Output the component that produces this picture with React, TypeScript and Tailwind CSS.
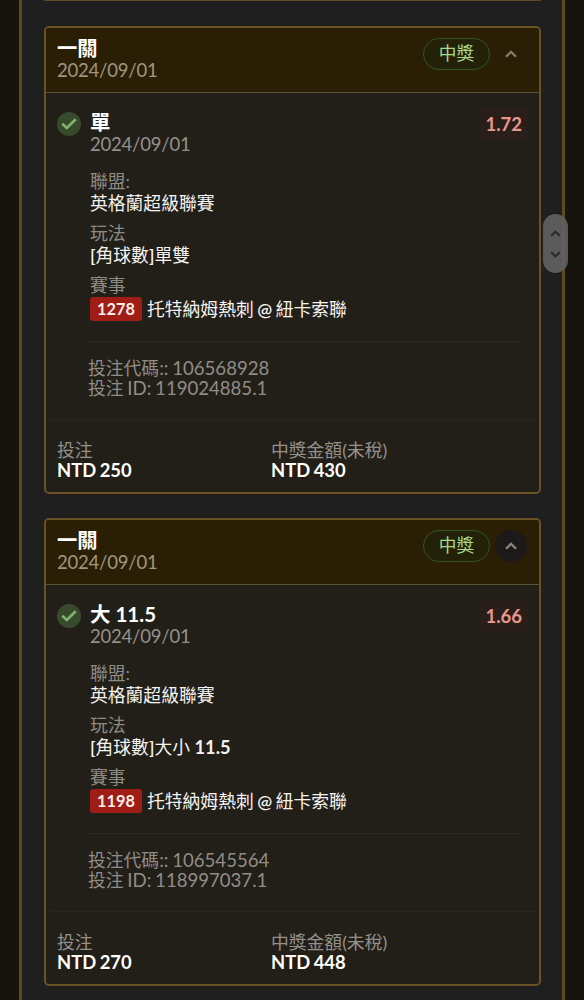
import React from "react";

type Bet = {
  pick: string;
  market: React.ReactNode;
  odds: string;
  event: string;
  code: string;
  id: string;
  stake: string;
  payout: string;
  active?: boolean;
};

const bets: Bet[] = [
  {
    pick: "單",
    market: (
      <>
        <span className="font-semibold">[</span>角球數<span className="font-semibold">]</span>單雙
      </>
    ),
    odds: "1.72",
    event: "1278",
    code: "106568928",
    id: "119024885.1",
    stake: "NTD 250",
    payout: "NTD 430",
  },
  {
    pick: "大 11.5",
    market: (
      <>
        <span className="font-semibold">[</span>角球數<span className="font-semibold">]</span>大小{" "}
        <b className="text-[18.2px] font-bold">11.5</b>
      </>
    ),
    odds: "1.66",
    event: "1198",
    code: "106545564",
    id: "118997037.1",
    stake: "NTD 270",
    payout: "NTD 448",
    active: true,
  },
];

function Chevron({ className = "", down = false }: { className?: string; down?: boolean }) {
  return (
    <svg viewBox="0 0 12 8" className={className} fill="none" stroke="currentColor" strokeWidth="2.3">
      <path d={down ? "M1 1.2 6 6.2 11 1.2" : "M1 6.8 6 1.8 11 6.8"} />
    </svg>
  );
}

function Field({ label, children }: { label: string; children: React.ReactNode }) {
  return (
    <div className="mb-[9px]">
      <div className="h-[21px] leading-[21px] text-[#8e8b85]">{label}</div>
      <div className="flex h-[22px] items-center leading-[21px] whitespace-pre text-[#f4f3f0]">{children}</div>
    </div>
  );
}

function BetCard({ bet }: { bet: Bet }) {
  return (
    <article className="flex h-[468px] shrink-0 flex-col overflow-hidden rounded-[5px] border-2 border-[#6b5222] bg-[#221f19]">
      <header className="flex h-[65px] shrink-0 items-start justify-between border-b border-[#5a5136] bg-[#2a1f05] pt-[10px] pr-[12px] pl-[11px]">
        <div>
          <h2 className="h-[21px] text-[20.3px] leading-[21px] font-bold text-white">一關</h2>
          <div className="h-[21px] text-[18.5px] leading-[22px] tracking-[-0.2px] text-[#a0967f]">2024/09/01</div>
        </div>
        <div className="flex items-center gap-[5px]">
          <span className="flex h-[32px] w-[67px] items-center justify-center rounded-full border border-[#35531f] bg-[#232209] text-[17.7px] leading-none text-[#a5d98a]">
            中獎
          </span>
          <button
            className={
              bet.active
                ? "flex size-8 items-center justify-center rounded-full bg-[#1c1a19] text-[#8a8782]"
                : "flex size-8 items-center justify-center rounded-full text-[#857b70]"
            }
          >
            <Chevron className="h-[8px] w-[12px]" />
          </button>
        </div>
      </header>

      <div className="flex px-[11px] pt-[19px]">
        <div className="flex size-6 shrink-0 items-center justify-center rounded-full bg-[#374a2c]">
          <svg viewBox="0 0 16 12" className="h-[12px] w-[16px]" fill="none" stroke="#83b46e" strokeWidth="2.6">
            <path d="M1.3 5.7 5.8 10 14.7 1.3" />
          </svg>
        </div>
        <div className="min-w-0 flex-1 pl-[9px]">
          <div className="flex justify-between">
            <div>
              <h3 className="h-[21px] text-[20.5px] leading-[21px] font-bold text-white">{bet.pick}</h3>
              <div className="h-[21px] text-[18.5px] leading-[22px] tracking-[-0.2px] text-[#94918b]">2024/09/01</div>
            </div>
            <span className="-mt-[4px] h-[31px] rounded bg-[#291e19] pr-[6px] pl-[5px] text-[18.5px] leading-[32px] font-bold text-[#e8988a]">
              {bet.odds}
            </span>
          </div>
          <div className="mt-[17px] text-[17.8px]">
            <Field label="聯盟:">英格蘭超級聯賽</Field>
            <Field label="玩法">{bet.market}</Field>
            <div>
              <div className="h-[21px] leading-[21px] text-[#8e8b85]">賽事</div>
              <div className="mt-[1px] flex h-6 items-center leading-6 whitespace-pre text-[#f4f3f0] [word-spacing:-1px]">
                <span className="mr-[5px] flex h-6 w-[52px] items-center justify-center rounded-[3px] bg-[#a01d15] text-[16.3px] font-bold text-[#fbeeea]">
                  {bet.event}
                </span>
                托特納姆熱刺 <span className="font-semibold">@</span> 紐卡索聯
              </div>
            </div>
          </div>
          <div className="mr-[5px] -ml-[2px] mt-[20px] border-t border-[#2a2821] pt-[16px] text-[18.6px] leading-5 text-[#908d88] [word-spacing:-1px]">
            <div>
              <span className="text-[17.8px]">投注代碼</span>:: {bet.code}
            </div>
            <div>
              <span className="text-[17.8px]">投注</span> ID: {bet.id}
            </div>
          </div>
        </div>
      </div>

      <footer className="mx-1 mt-auto grid h-[73px] shrink-0 grid-cols-[214px_1fr] border-t border-[#282620] pt-[20px] pl-[7px] leading-5">
        <div>
          <div className="text-[17.8px] text-[#94918b]">投注</div>
          <div className="text-[18.4px] font-bold text-white [word-spacing:-1px]">{bet.stake}</div>
        </div>
        <div>
          <div className="text-[17.8px] text-[#94918b]">中獎金額(未稅)</div>
          <div className="text-[18.4px] font-bold text-white [word-spacing:-1px]">{bet.payout}</div>
        </div>
      </footer>
    </article>
  );
}

export default function App() {
  return (
    <div className="relative h-[1000px] w-[584px] overflow-hidden bg-[#17130d] pr-[19px] pl-[19px] font-[Lato,'Noto_Sans_CJK_TC',sans-serif]">
      <main className="flex h-full flex-col border-x-[3px] border-[#5f4a1f] bg-[#1f1f1f] pr-[21px] pl-[22px]">
        <div className="h-[1px] shrink-0 rounded-b-[5px] bg-[#5f4a25]" />
        <div className="mt-[25px] flex flex-col gap-[24px]">
          {bets.map((bet) => (
            <BetCard key={bet.id} bet={bet} />
          ))}
        </div>
      </main>
      <div className="absolute top-[214px] left-[543px] flex h-[59px] w-[25px] flex-col items-center justify-between rounded-full bg-[#626262]/90 pt-[16px] pb-[15px] text-[#292929]">
        <Chevron className="h-[7px] w-[11px]" />
        <Chevron className="h-[7px] w-[11px]" down />
      </div>
    </div>
  );
}
